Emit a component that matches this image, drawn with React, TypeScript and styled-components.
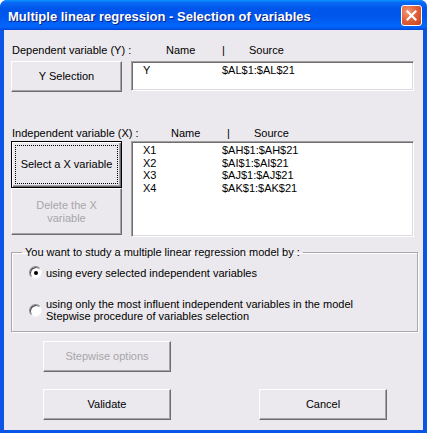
import React from "react";
import styled, { createGlobalStyle, css } from "styled-components";

const GlobalStyle = createGlobalStyle`
	html, body {
		margin: 0;
		padding: 0;
		background: #ffffff;
	}
	body {
		font-family: "Liberation Sans", Arial, sans-serif;
		font-size: 11px;
		color: #000;
	}
`;

const Window = styled.div`
	width: 427px;
	height: 433px;
	box-sizing: border-box;
	display: flex;
	flex-direction: column;
	background: #0a55e6;
	border-radius: 7px 7px 0 0;
	overflow: hidden;
`;

const TitleBar = styled.div`
	height: 30px;
	flex: 0 0 30px;
	display: flex;
	align-items: center;
	justify-content: space-between;
	padding: 0 5px 0 8px;
	box-sizing: border-box;
	background: linear-gradient(
		to bottom,
		#0997ff 0%,
		#0a6af5 8%,
		#0055ea 30%,
		#0058ee 60%,
		#0065fb 85%,
		#0060f6 92%,
		#0046d8 100%
	);
`;

const Title = styled.span`
	font-family: "Liberation Sans", Arial, sans-serif;
	font-weight: bold;
	font-size: 13px;
	color: #fff;
	text-shadow: 1px 1px 0 #0a1e80;
	padding-top: 2px;
`;

const CloseButton = styled.div`
	width: 21px;
	height: 21px;
	box-sizing: border-box;
	border: 1px solid #fff;
	border-radius: 3px;
	background: radial-gradient(circle at 30% 30%, #f29a78 0%, #e2613a 45%, #c8421c 100%);
	display: flex;
	align-items: center;
	justify-content: center;
	margin-top: 1px;
`;

const Body = styled.div`
	flex: 1;
	margin: 0 4px 3px 4px;
	background: #ebe9ed;
	padding: 14px 5px 0 7px;
	display: flex;
	flex-direction: column;
`;

const HeaderRow = styled.div<{ $first: number; $name: number }>`
	display: grid;
	grid-template-columns: ${(p) => p.$first}px ${(p) => p.$name}px 27px auto;
	height: 13px;
	line-height: 13px;
	padding-left: 1px;
	white-space: nowrap;
`;

const Row = styled.div`
	display: flex;
	gap: 9px;
	margin-right: 4px;
`;

const ButtonColumn = styled.div`
	width: 111px;
	display: flex;
	flex-direction: column;
`;

const Button = styled.div<{ $h?: number; $w?: number; $disabled?: boolean; $focused?: boolean }>`
	position: relative;
	height: ${(p) => p.$h ?? 31}px;
	width: ${(p) => (p.$w ? `${p.$w}px` : "auto")};
	box-sizing: border-box;
	background: #ebe9ed;
	border-style: solid;
	border-width: 1px;
	border-color: #ffffff #6c6c6c #6c6c6c #ffffff;
	box-shadow: inset -1px -1px 0 #a5a4a8;
	display: flex;
	align-items: center;
	justify-content: center;
	text-align: center;
	line-height: 13px;
	color: ${(p) => (p.$disabled ? "#a7a6aa" : "#000")};
	${(p) =>
		p.$focused &&
		css`
			border-color: #000;
			box-shadow: inset 1px 1px 0 #fff, inset -1px -1px 0 #6c6c6c, inset -2px -2px 0 #a5a4a8;
			&::after {
				content: "";
				position: absolute;
				inset: 3px;
				border: 1px dotted #000;
			}
		`}
`;

const ListBox = styled.div<{ $h: number }>`
	flex: 1;
	height: ${(p) => p.$h}px;
	box-sizing: border-box;
	background: #fff;
	border-style: solid;
	border-width: 1px;
	border-color: #a0a0a0 #ffffff #ffffff #a0a0a0;
	box-shadow: inset 1px 1px 0 #6e6e6e, inset -1px -1px 0 #dcdbe0;
	padding: 2px 0 0 11px;
`;

const ListItem = styled.div`
	display: grid;
	grid-template-columns: 79px auto;
	line-height: 12.6px;
	height: 12.6px;
	white-space: nowrap;
`;

const Group = styled.fieldset`
	margin: 9px 0 0 0;
	padding: 0 0 9px 0;
	border: 1px solid #a8a7ab;
	box-shadow: inset 1px 1px 0 #fff, 1px 1px 0 #fff;
	min-width: 0;
`;

const Legend = styled.legend`
	margin-left: 10px;
	padding: 0 3px;
	line-height: 13px;
`;

const RadioList = styled.div`
	display: flex;
	flex-direction: column;
	gap: 19px;
	padding: 7px 0 0 17px;
`;

const RadioRow = styled.div`
	display: flex;
	align-items: center;
	gap: 4px;
`;

const RadioCircle = styled.span<{ $checked?: boolean }>`
	width: 13px;
	height: 13px;
	box-sizing: border-box;
	border-radius: 50%;
	background: #fff;
	border: 1px solid;
	border-color: #8a8a8e #f4f4f6 #f4f4f6 #8a8a8e;
	box-shadow: inset 1px 1px 0 #4a4a4a;
	display: flex;
	align-items: center;
	justify-content: center;
	flex: 0 0 13px;
	&::after {
		content: "";
		display: ${(p) => (p.$checked ? "block" : "none")};
		width: 4px;
		height: 4px;
		border-radius: 50%;
		background: #000;
	}
`;

const RadioText = styled.div`
	line-height: 12px;
`;

const FooterRow = styled.div<{ $mt: number }>`
	display: flex;
	margin-top: ${(p) => p.$mt}px;
	padding-left: 32px;
	gap: 88px;
`;

const App = () => {
	return (
		<>
			<GlobalStyle />
			<Window>
				<TitleBar>
					<Title>Multiple linear regression - Selection of variables</Title>
					<CloseButton>
						<svg width="11" height="11" viewBox="0 0 11 11">
							<path d="M1.5 1.5 L9.5 9.5 M9.5 1.5 L1.5 9.5" stroke="#fff" strokeWidth="2.2" strokeLinecap="square" />
						</svg>
					</CloseButton>
				</TitleBar>
				<Body>
					<HeaderRow $first={154} $name={56}>
						<span>Dependent variable (Y) :</span>
						<span>Name</span>
						<span>|</span>
						<span>Source</span>
					</HeaderRow>
					<Row style={{ marginTop: 4 }}>
						<ButtonColumn>
							<Button $h={31}>Y Selection</Button>
						</ButtonColumn>
						<ListBox $h={30}>
							<ListItem>
								<span>Y</span>
								<span>$AL$1:$AL$21</span>
							</ListItem>
						</ListBox>
					</Row>
					<HeaderRow $first={159} $name={56} style={{ marginTop: 35 }}>
						<span>Independent variable (X) :</span>
						<span>Name</span>
						<span>|</span>
						<span>Source</span>
					</HeaderRow>
					<Row style={{ marginTop: 1 }}>
						<ButtonColumn>
							<Button $h={47} $focused>
								Select a X variable
							</Button>
							<Button $h={47} $disabled>
								Delete the X
								<br />
								variable
							</Button>
						</ButtonColumn>
						<ListBox $h={96}>
							<ListItem>
								<span>X1</span>
								<span>$AH$1:$AH$21</span>
							</ListItem>
							<ListItem>
								<span>X2</span>
								<span>$AI$1:$AI$21</span>
							</ListItem>
							<ListItem>
								<span>X3</span>
								<span>$AJ$1:$AJ$21</span>
							</ListItem>
							<ListItem>
								<span>X4</span>
								<span>$AK$1:$AK$21</span>
							</ListItem>
						</ListBox>
					</Row>
					<Group>
						<Legend>You want to study a multiple linear regression model by :</Legend>
						<RadioList>
							<RadioRow>
								<RadioCircle $checked />
								<RadioText>using every selected independent variables</RadioText>
							</RadioRow>
							<RadioRow>
								<RadioCircle />
								<RadioText>
									using only the most influent independent variables in the model
									<br />
									Stepwise procedure of variables selection
								</RadioText>
							</RadioRow>
						</RadioList>
					</Group>
					<FooterRow $mt={9}>
						<Button $w={128} $disabled>
							Stepwise options
						</Button>
					</FooterRow>
					<FooterRow $mt={17}>
						<Button $w={128}>Validate</Button>
						<Button $w={128}>Cancel</Button>
					</FooterRow>
				</Body>
			</Window>
		</>
	);
};

export default App;
